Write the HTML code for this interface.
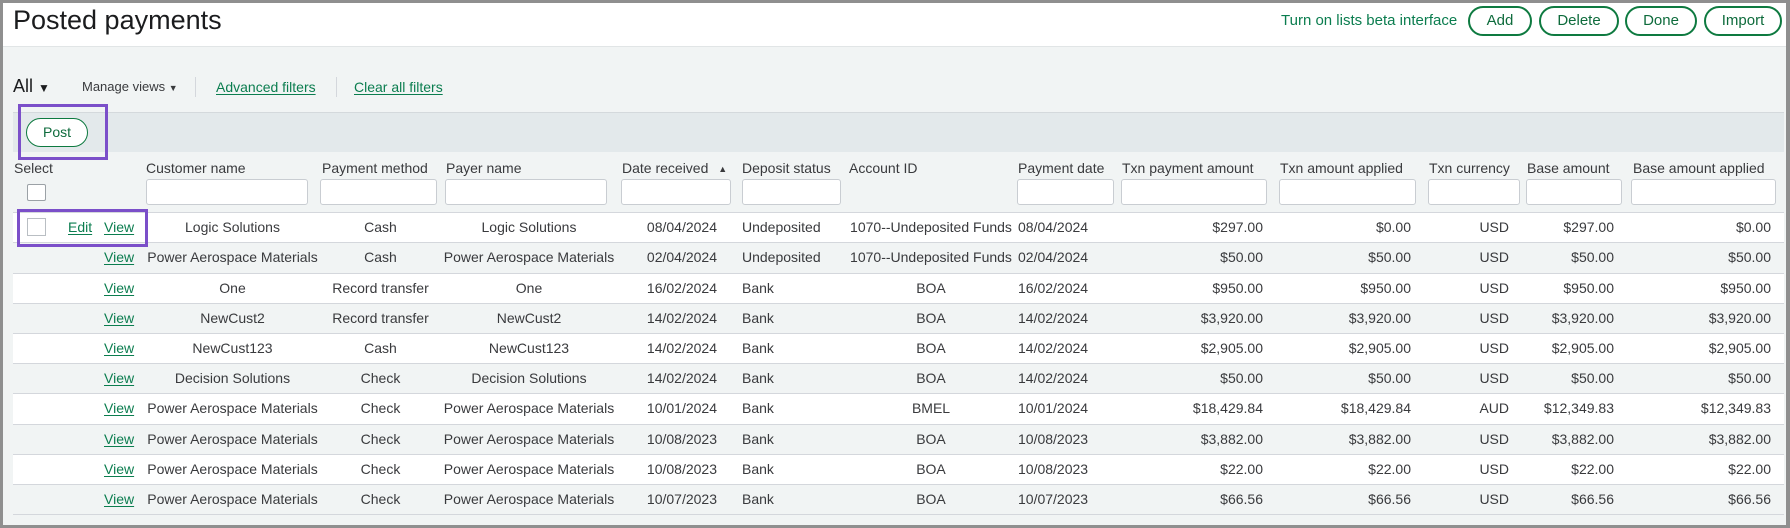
<!DOCTYPE html>
<html><head><meta charset="utf-8"><style>
*{box-sizing:border-box;margin:0;padding:0}
body{width:1790px;height:528px;overflow:hidden;background:#8f8f8f;font-family:"Liberation Sans",Arial,sans-serif;color:#393a3d;font-size:14px;position:relative}
.frame{position:absolute;left:3px;top:3px;width:1783px;height:522px;background:#f1f4f4}
.abs{position:absolute}
.top{position:absolute;left:3px;top:3px;width:1783px;height:44px;background:#fff;border-bottom:1px solid #e1e5e6}
.title{left:13px;top:5px;font-size:27px;color:#1b1c1e}
.g{color:#0b7d4f}
.btn{position:absolute;top:6px;height:30px;border:2px solid #0e7a40;border-radius:15px;background:#fff;color:#0e6b3c;font-size:15px;text-align:center;line-height:26px}
.lnk{color:#0b7d4f;text-decoration:underline;text-underline-offset:2px}
.band{left:13px;top:112px;width:1771px;height:40px;background:#e3e9eb;border-top:1px solid #d4d9dc}
.post{left:26px;top:118px;width:62px;height:29px;border:1.5px solid #0e7a40;border-radius:15px;background:#fff;color:#0e6b3c;text-align:center;line-height:26px;font-size:14px}
.purple{border:3px solid #7b4fc9}
.hd{top:140px;font-size:14px;color:#393a3d}
.inp{top:179px;height:26px;background:#fff;border:1px solid #c9cdd2;border-radius:3px}
.tbl{left:13px;top:212px;width:1771px;height:302px;border-left:1px solid #d4d7dc}
.row{position:absolute;left:13px;width:1771px;height:31px;border-top:1px solid #d4d7dc;line-height:29px;white-space:nowrap}
.row span{position:absolute;top:0}
.w{background:#fff}.s{background:#f1f4f4}
.c1{left:132px;width:175px;text-align:center}
.c2{left:307px;width:121px;text-align:center}
.c3{left:428px;width:176px;text-align:center}
.c4{left:604px;width:100px;text-align:right}
.c5{left:729px;width:110px}
.c6{left:832px;width:172px;text-align:center}
.c7{left:1005px;width:100px}
.c8{left:1107px;width:143px;text-align:right}
.c9{left:1257px;width:141px;text-align:right}
.c10{left:1407px;width:89px;text-align:right}
.c11{left:1507px;width:94px;text-align:right}
.c12{left:1617px;width:141px;text-align:right}
.v{left:91px}
</style></head><body>
<div class="frame"></div>
<div class="top"></div>
<div class="abs title">Posted payments</div>
<div class="abs g" style="left:1281px;top:12px;font-size:15px">Turn on lists beta interface</div>
<div class="btn" style="left:1468px;width:64px">Add</div>
<div class="btn" style="left:1539px;width:80px">Delete</div>
<div class="btn" style="left:1625px;width:72px">Done</div>
<div class="btn" style="left:1704px;width:78px">Import</div>

<div class="abs" style="left:13px;top:76px;font-size:18px;color:#1b1c1e">All <span style="font-size:12px">▼</span></div>
<div class="abs" style="left:82px;top:79px;font-size:13px">Manage views <span style="font-size:9px">▼</span></div>
<div class="abs" style="left:195px;top:77px;width:1px;height:20px;background:#d4d7dc"></div>
<div class="abs lnk" style="left:216px;top:79px;font-size:14px">Advanced filters</div>
<div class="abs" style="left:336px;top:77px;width:1px;height:20px;background:#d4d7dc"></div>
<div class="abs lnk" style="left:354px;top:79px;font-size:14px">Clear all filters</div>

<div class="abs band"></div>
<div class="abs post">Post</div>
<div class="abs purple" style="left:18px;top:104px;width:90px;height:56px"></div>

<div class="abs hd" style="left:14px;top:160px">Select</div>
<div class="abs" style="left:27px;top:184px;width:19px;height:17px;background:#fff;border:1px solid #9ba1a6;border-radius:2px"></div>
<div class="abs hd" style="left:146px;top:160px">Customer name</div>
<div class="abs hd" style="left:322px;top:160px">Payment method</div>
<div class="abs hd" style="left:446px;top:160px">Payer name</div>
<div class="abs hd" style="left:622px;top:160px">Date received <span style="font-size:9px;margin-left:6px;position:relative;top:-1px">▲</span></div>
<div class="abs hd" style="left:742px;top:160px">Deposit status</div>
<div class="abs hd" style="left:849px;top:160px">Account ID</div>
<div class="abs hd" style="left:1018px;top:160px">Payment date</div>
<div class="abs hd" style="left:1122px;top:160px">Txn payment amount</div>
<div class="abs hd" style="left:1280px;top:160px">Txn amount applied</div>
<div class="abs hd" style="left:1429px;top:160px">Txn currency</div>
<div class="abs hd" style="left:1527px;top:160px">Base amount</div>
<div class="abs hd" style="left:1633px;top:160px">Base amount applied</div>
<div class="abs inp" style="left:146px;width:162px"></div>
<div class="abs inp" style="left:320px;width:117px"></div>
<div class="abs inp" style="left:445px;width:162px"></div>
<div class="abs inp" style="left:621px;width:110px"></div>
<div class="abs inp" style="left:742px;width:99px"></div>
<div class="abs inp" style="left:1017px;width:97px"></div>
<div class="abs inp" style="left:1121px;width:146px"></div>
<div class="abs inp" style="left:1279px;width:137px"></div>
<div class="abs inp" style="left:1428px;width:92px"></div>
<div class="abs inp" style="left:1526px;width:96px"></div>
<div class="abs inp" style="left:1631px;width:145px"></div>

<div class="abs tbl"></div>
<div class="row w" style="top:212px"><span style="left:14px;top:5px;width:19px;height:18px;border:1px solid #b9bec3;background:#fff"></span><span class="lnk" style="left:55px">Edit</span><span class="lnk v">View</span><span class="c1">Logic Solutions</span><span class="c2">Cash</span><span class="c3">Logic Solutions</span><span class="c4">08/04/2024</span><span class="c5">Undeposited</span><span class="c6">1070--Undeposited Funds</span><span class="c7">08/04/2024</span><span class="c8">$297.00</span><span class="c9">$0.00</span><span class="c10">USD</span><span class="c11">$297.00</span><span class="c12">$0.00</span></div>
<div class="row s" style="top:242px"><span class="lnk v">View</span><span class="c1">Power Aerospace Materials</span><span class="c2">Cash</span><span class="c3">Power Aerospace Materials</span><span class="c4">02/04/2024</span><span class="c5">Undeposited</span><span class="c6">1070--Undeposited Funds</span><span class="c7">02/04/2024</span><span class="c8">$50.00</span><span class="c9">$50.00</span><span class="c10">USD</span><span class="c11">$50.00</span><span class="c12">$50.00</span></div>
<div class="row w" style="top:273px"><span class="lnk v">View</span><span class="c1">One</span><span class="c2">Record transfer</span><span class="c3">One</span><span class="c4">16/02/2024</span><span class="c5">Bank</span><span class="c6">BOA</span><span class="c7">16/02/2024</span><span class="c8">$950.00</span><span class="c9">$950.00</span><span class="c10">USD</span><span class="c11">$950.00</span><span class="c12">$950.00</span></div>
<div class="row s" style="top:303px"><span class="lnk v">View</span><span class="c1">NewCust2</span><span class="c2">Record transfer</span><span class="c3">NewCust2</span><span class="c4">14/02/2024</span><span class="c5">Bank</span><span class="c6">BOA</span><span class="c7">14/02/2024</span><span class="c8">$3,920.00</span><span class="c9">$3,920.00</span><span class="c10">USD</span><span class="c11">$3,920.00</span><span class="c12">$3,920.00</span></div>
<div class="row w" style="top:333px"><span class="lnk v">View</span><span class="c1">NewCust123</span><span class="c2">Cash</span><span class="c3">NewCust123</span><span class="c4">14/02/2024</span><span class="c5">Bank</span><span class="c6">BOA</span><span class="c7">14/02/2024</span><span class="c8">$2,905.00</span><span class="c9">$2,905.00</span><span class="c10">USD</span><span class="c11">$2,905.00</span><span class="c12">$2,905.00</span></div>
<div class="row s" style="top:363px"><span class="lnk v">View</span><span class="c1">Decision Solutions</span><span class="c2">Check</span><span class="c3">Decision Solutions</span><span class="c4">14/02/2024</span><span class="c5">Bank</span><span class="c6">BOA</span><span class="c7">14/02/2024</span><span class="c8">$50.00</span><span class="c9">$50.00</span><span class="c10">USD</span><span class="c11">$50.00</span><span class="c12">$50.00</span></div>
<div class="row w" style="top:393px"><span class="lnk v">View</span><span class="c1">Power Aerospace Materials</span><span class="c2">Check</span><span class="c3">Power Aerospace Materials</span><span class="c4">10/01/2024</span><span class="c5">Bank</span><span class="c6">BMEL</span><span class="c7">10/01/2024</span><span class="c8">$18,429.84</span><span class="c9">$18,429.84</span><span class="c10">AUD</span><span class="c11">$12,349.83</span><span class="c12">$12,349.83</span></div>
<div class="row s" style="top:424px"><span class="lnk v">View</span><span class="c1">Power Aerospace Materials</span><span class="c2">Check</span><span class="c3">Power Aerospace Materials</span><span class="c4">10/08/2023</span><span class="c5">Bank</span><span class="c6">BOA</span><span class="c7">10/08/2023</span><span class="c8">$3,882.00</span><span class="c9">$3,882.00</span><span class="c10">USD</span><span class="c11">$3,882.00</span><span class="c12">$3,882.00</span></div>
<div class="row w" style="top:454px"><span class="lnk v">View</span><span class="c1">Power Aerospace Materials</span><span class="c2">Check</span><span class="c3">Power Aerospace Materials</span><span class="c4">10/08/2023</span><span class="c5">Bank</span><span class="c6">BOA</span><span class="c7">10/08/2023</span><span class="c8">$22.00</span><span class="c9">$22.00</span><span class="c10">USD</span><span class="c11">$22.00</span><span class="c12">$22.00</span></div>
<div class="row s" style="top:484px;border-bottom:1px solid #d4d7dc"><span class="lnk v">View</span><span class="c1">Power Aerospace Materials</span><span class="c2">Check</span><span class="c3">Power Aerospace Materials</span><span class="c4">10/07/2023</span><span class="c5">Bank</span><span class="c6">BOA</span><span class="c7">10/07/2023</span><span class="c8">$66.56</span><span class="c9">$66.56</span><span class="c10">USD</span><span class="c11">$66.56</span><span class="c12">$66.56</span></div>
<div class="abs purple" style="left:17px;top:209px;width:131px;height:38px"></div>
</body></html>
